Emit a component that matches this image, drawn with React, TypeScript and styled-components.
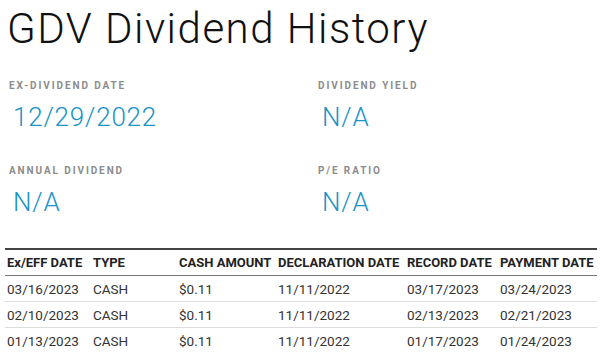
import React from 'react';
import styled, { createGlobalStyle } from 'styled-components';

const GlobalStyle = createGlobalStyle`
  body {
    margin: 0;
    background: #fff;
    font-family: Roboto, "Liberation Sans", sans-serif;
  }
`;

const Page = styled.div`
  width: 600px;
  height: 352px;
  overflow: hidden;
  padding: 0 3px 0 5px;
  box-sizing: border-box;
`;

const Title = styled.h1`
  margin: 0;
  padding: 4px 0 0 2px;
  font-family: Roboto, sans-serif;
  font-weight: 300;
  font-size: 42px;
  letter-spacing: 1.5px;
  line-height: 50px;
  color: #111;
`;

const StatGrid = styled.div`
  display: grid;
  grid-template-columns: 309px 1fr;
  row-gap: 31px;
  padding: 25px 0 0 4px;
`;

const Stat = styled.div`
  display: flex;
  flex-direction: column;
`;

const Label = styled.div`
  font-size: 10px;
  font-weight: 700;
  letter-spacing: 1.9px;
  color: #8c8c8c;
  line-height: 14px;
  text-transform: uppercase;
`;

const Value = styled.div`
  font-size: 26px;
  font-weight: 300;
  letter-spacing: 0.8px;
  color: #1a93c6;
  line-height: 32px;
  padding-left: 4px;
  margin-top: 8px;
`;

const Table = styled.table`
  width: 592px;
  margin-top: 30px;
  border-collapse: collapse;
  table-layout: fixed;
  border-top: 2px solid #444;
  font-size: 13.5px;
`;

const Th = styled.th`
  text-align: left;
  font-weight: 700;
  font-size: 13px;
  color: #222;
  height: 25px;
  padding: 0 0 0 2px;
  white-space: nowrap;
  border-bottom: 1.5px solid #777;
`;

const Td = styled.td`
  color: #333;
  height: 25px;
  padding: 0 0 0 2px;
  white-space: nowrap;
`;

const Row = styled.tr<{ $last?: boolean }>`
  td {
    border-bottom: ${(p) => (p.$last ? 'none' : '1px solid #ddd')};
  }
`;

const stats = [
  { label: 'Ex-Dividend Date', value: '12/29/2022' },
  { label: 'Dividend Yield', value: 'N/A' },
  { label: 'Annual Dividend', value: 'N/A' },
  { label: 'P/E Ratio', value: 'N/A' },
];

const colWidths = [86, 86, 99, 129, 93, 99];

const rows = [
  ['03/16/2023', 'CASH', '$0.11', '11/11/2022', '03/17/2023', '03/24/2023'],
  ['02/10/2023', 'CASH', '$0.11', '11/11/2022', '02/13/2023', '02/21/2023'],
  ['01/13/2023', 'CASH', '$0.11', '11/11/2022', '01/17/2023', '01/24/2023'],
];

export default function App() {
  return (
    <>
      <GlobalStyle />
      <Page>
        <Title>GDV Dividend History</Title>
        <StatGrid>
          {stats.map((s) => (
            <Stat key={s.label}>
              <Label>{s.label}</Label>
              <Value>{s.value}</Value>
            </Stat>
          ))}
        </StatGrid>
        <Table>
          <colgroup>
            {colWidths.map((w, i) => (
              <col key={i} style={{ width: w }} />
            ))}
          </colgroup>
          <thead>
            <tr>
              <Th>Ex/EFF DATE</Th>
              <Th>TYPE</Th>
              <Th>CASH AMOUNT</Th>
              <Th>DECLARATION DATE</Th>
              <Th>RECORD DATE</Th>
              <Th>PAYMENT DATE</Th>
            </tr>
          </thead>
          <tbody>
            {rows.map((r, i) => (
              <Row key={i} $last={i === rows.length - 1}>
                {r.map((c, j) => (
                  <Td key={j}>{c}</Td>
                ))}
              </Row>
            ))}
          </tbody>
        </Table>
      </Page>
    </>
  );
}
